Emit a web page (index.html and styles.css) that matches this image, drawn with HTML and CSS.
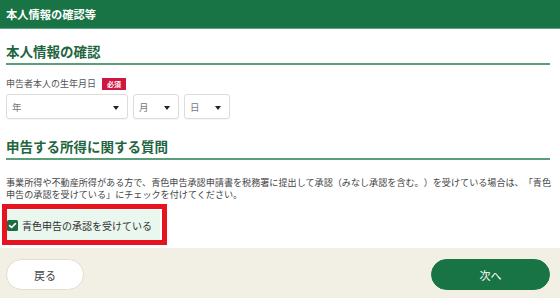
FILE: index.html
```html
<!DOCTYPE html>
<html lang="ja">
<head>
<meta charset="utf-8">
<title>本人情報の確認等</title>
<link rel="stylesheet" href="styles.css">
</head>
<body>
<header class="topbar">本人情報の確認等</header>
<main class="main">
  <h2 class="sec-title">本人情報の確認</h2>
  <div class="field-label">申告者本人の生年月日<span class="badge">必須</span></div>
  <div class="selects">
    <div class="sel sel-year">年<span class="caret"></span></div>
    <div class="sel sel-small">月<span class="caret"></span></div>
    <div class="sel sel-small">日<span class="caret"></span></div>
  </div>
  <h2 class="sec-title sec-title-2">申告する所得に関する質問</h2>
  <p class="desc">事業所得や不動産所得がある方で、青色申告承認申請書を税務署に提出して承認（みなし承認を含む。）を受けている場合は、「青色申告の承認を受けている」にチェックを付けてください。</p>
  <div class="highlight">
    <label class="check-item">
      <span class="checkbox"><svg viewBox="0 0 11 11" width="11" height="11"><path d="M2.6 5.6 L4.6 7.5 L8.4 3.6" fill="none" stroke="#fff" stroke-width="1.7" stroke-linecap="round" stroke-linejoin="round"/></svg></span>
      <span class="check-text">青色申告の承認を受けている</span>
    </label>
  </div>
</main>
<footer class="footer">
  <button class="btn btn-back">戻る</button>
  <button class="btn btn-next">次へ</button>
</footer>
</body>
</html>
```
FILE: styles.css
```css
html, body {
  margin: 0;
  padding: 0;
}
body {
  width: 560px;
  height: 298px;
  display: flex;
  flex-direction: column;
  font-family: "Noto Sans CJK JP", "Noto Sans", sans-serif;
  color: #333;
  background: #fff;
  overflow: hidden;
  text-spacing-trim: space-all;
}
.topbar {
  height: 28px;
  flex: none;
  display: flex;
  align-items: center;
  padding-left: 6px;
  background: #187444;
  border-bottom: 1px solid #62a383;
  color: #fff;
  font-weight: 700;
  font-size: 11.25px;
}
.main {
  flex: 1;
  padding: 0 10px 0 6px;
}
.sec-title {
  margin: 14px 0 0;
  padding-bottom: 4px;
  font-size: 13.5px;
  line-height: 16px;
  font-weight: 700;
  color: #1f6640;
  border-bottom: 2px solid #5a9f78;
}
.sec-title-2 {
  margin-top: 19px;
}
.field-label {
  margin-top: 12px;
  height: 13px;
  display: flex;
  align-items: center;
  font-size: 9px;
  color: #555;
}
.badge {
  margin-left: 6px;
  height: 12px;
  padding: 0 5px;
  display: inline-flex;
  align-items: center;
  background: #cf1741;
  color: #fff;
  font-size: 7px;
  font-weight: 700;
}
.selects {
  margin-top: 4px;
  display: flex;
  gap: 5px;
}
.sel {
  position: relative;
  height: 25px;
  box-sizing: border-box;
  border: 1px solid #dcdcdc;
  border-radius: 3px;
  box-shadow: 0 1px 1px rgba(0,0,0,0.04);
  display: flex;
  align-items: center;
  padding-left: 5px;
  font-size: 9.5px;
  color: #777;
}
.sel-year { width: 122px; }
.sel-small { width: 46px; }
.caret {
  position: absolute;
  right: 8px;
  top: 11px;
  width: 0;
  height: 0;
  border-left: 3px solid transparent;
  border-right: 3px solid transparent;
  border-top: 4px solid #222;
}
.desc {
  margin: 16px -6px 0 0;
  font-size: 9.1px;
  line-height: 12px;
  color: #444;
  text-spacing-trim: space-all;
}
.highlight {
  margin-top: 4px;
  margin-left: -4px;
  width: 155px;
  padding: 1px 0 0 0;
  border: 5px solid #e5141f;
}
.check-item {
  width: 153px;
  height: 30px;
  display: flex;
  align-items: center;
  gap: 4px;
  background: #e9f7ef;
}
.checkbox {
  width: 11px;
  height: 11px;
  flex: none;
  border-radius: 1.5px;
  background: #1c6d43;
  display: flex;
}
.check-text {
  font-size: 10px;
  color: #333;
}
.footer {
  height: 50px;
  flex: none;
  background: #f2efe5;
  display: flex;
  justify-content: space-between;
  align-items: flex-start;
  padding: 11px 10px 0 6px;
  box-sizing: border-box;
}
.btn {
  height: 31px;
  border-radius: 16px;
  font-family: "Noto Sans CJK JP", "Noto Sans", sans-serif;
  font-size: 11px;
  cursor: pointer;
  padding: 0;
}
.btn-back {
  width: 78px;
  background: #fff;
  border: 1px solid #e2ded0;
  color: #444;
}
.btn-next {
  width: 119px;
  background: #187444;
  border: 1px solid #187444;
  color: #fff;
}
```
